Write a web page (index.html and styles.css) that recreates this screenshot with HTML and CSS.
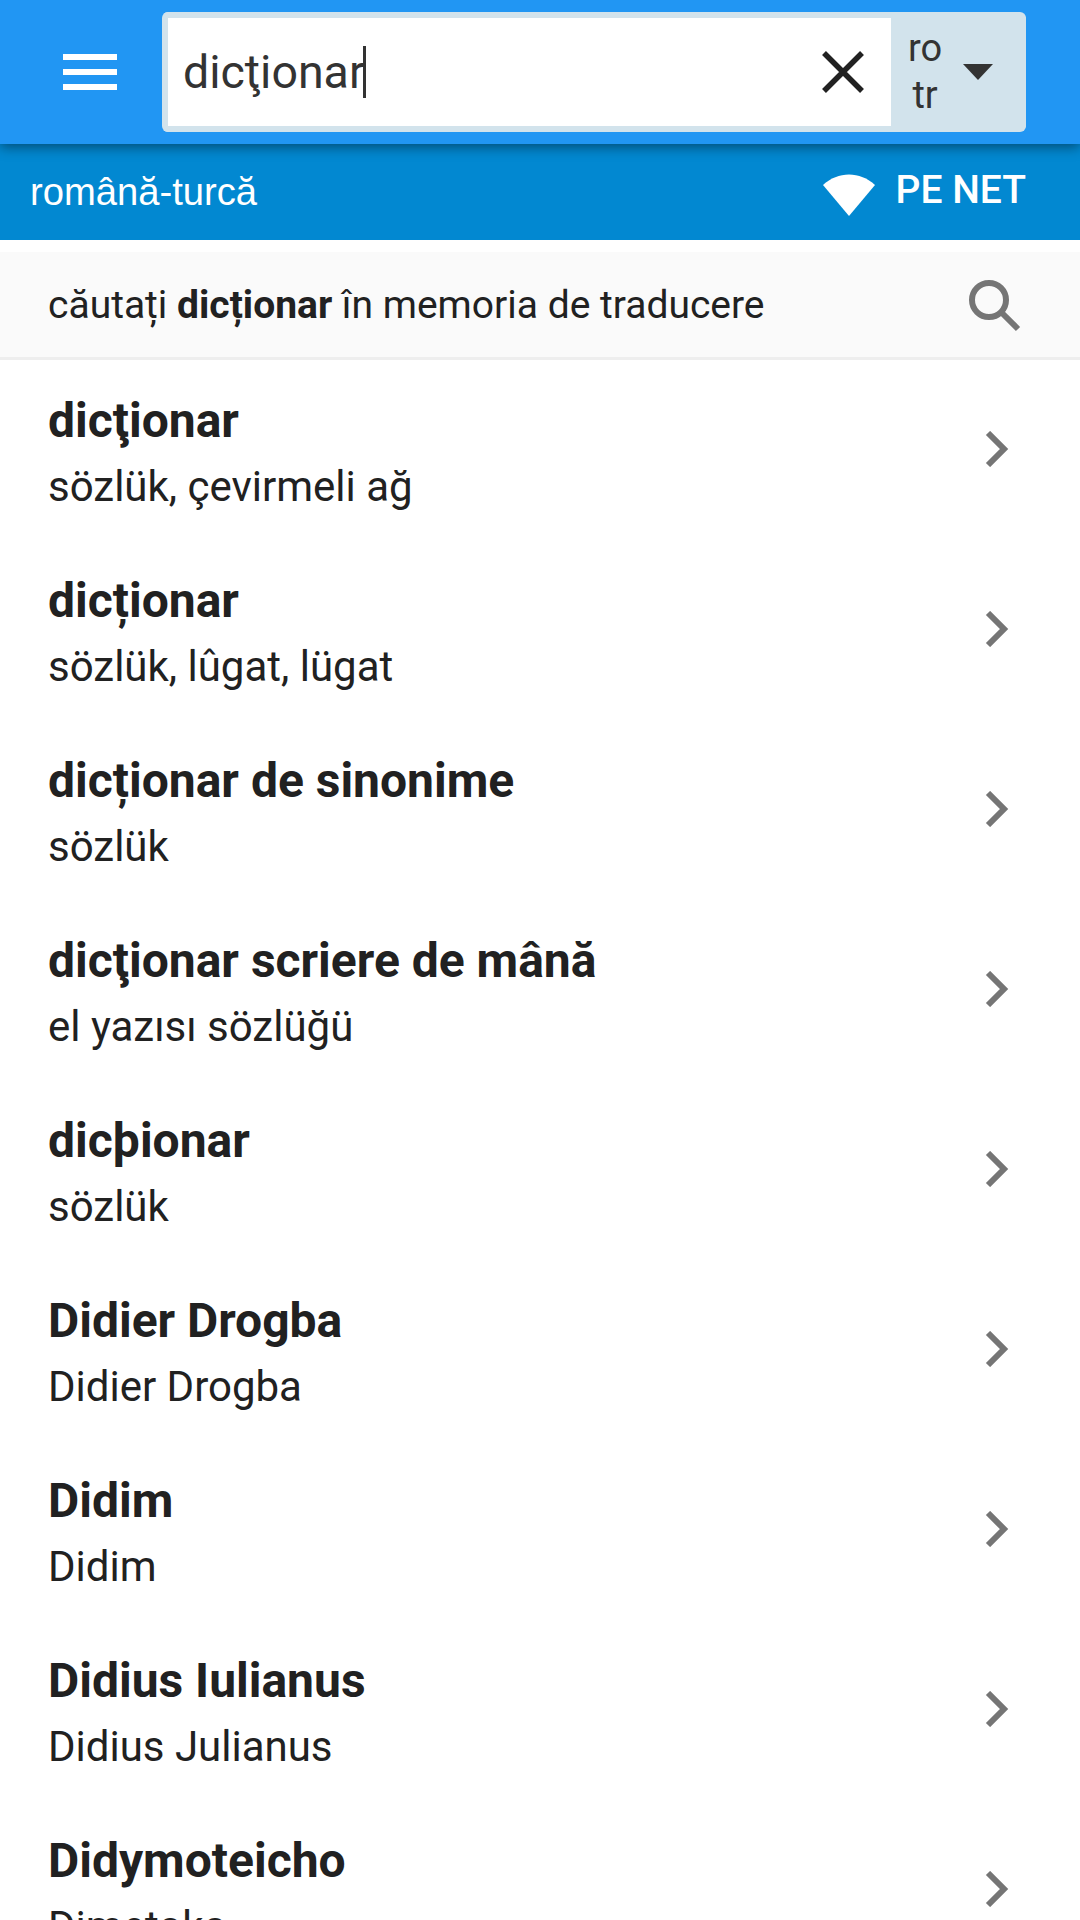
FILE: index.html
```html
<!DOCTYPE html>
<html lang="ro">
<head>
	<meta charset="UTF-8">
	<title>dicționar</title>
	<link rel="stylesheet" href="styles.css">
</head>
<body>
	<div class="app">
		<header class="topbar">
			<div class="menu">
				<svg width="54" height="36" viewBox="0 0 54 36"><path fill="#fff" d="M0 0h54v6H0zM0 15h54v6H0zM0 30h54v6H0z"/></svg>
			</div>
			<div class="searchbox">
				<div class="field">
					<div class="query">dicţionar<span class="caret"></span></div>
					<svg class="clear" width="42" height="42" viewBox="0 0 42 42"><path fill="none" stroke="#212121" stroke-width="5.5" d="M2 2l38 38M40 2L2 40"/></svg>
				</div>
				<div class="langs">
					<div class="codes"><span>ro</span><span>tr</span></div>
					<svg width="30" height="16" viewBox="0 0 30 16"><path fill="#333" d="M0 0h30L15 16z"/></svg>
				</div>
			</div>
		</header>
		<div class="subbar">
			<span class="dict">română-turcă</span>
			<div class="status">
				<svg class="wifi" width="54" height="42" viewBox="0 0 54 42"><path fill="#fff" d="M27 42L1 11C16 -3 38 -3 53 11z"/></svg>
				<span class="online">PE NET</span>
			</div>
		</div>
		<div class="memory">
			<span>căutați <b>dicționar</b> în memoria de traducere</span>
			<svg width="54" height="54" viewBox="0 0 54 54"><circle cx="22" cy="22" r="17" fill="none" stroke="#757575" stroke-width="6"/><path stroke="#757575" stroke-width="6" d="M34 34l17 17"/></svg>
		</div>
		<ul class="list">
			<li><div><h3>dicţionar</h3><p>sözlük, çevirmeli ağ</p></div><svg class="chev" width="24" height="36" viewBox="0 0 24 36"><path fill="none" stroke="#757575" stroke-width="6" d="M3 2l16 16L3 34"/></svg></li>
			<li><div><h3>dicționar</h3><p>sözlük, lûgat, lügat</p></div><svg class="chev" width="24" height="36" viewBox="0 0 24 36"><path fill="none" stroke="#757575" stroke-width="6" d="M3 2l16 16L3 34"/></svg></li>
			<li><div><h3>dicționar de sinonime</h3><p>sözlük</p></div><svg class="chev" width="24" height="36" viewBox="0 0 24 36"><path fill="none" stroke="#757575" stroke-width="6" d="M3 2l16 16L3 34"/></svg></li>
			<li><div><h3>dicţionar scriere de mână</h3><p>el yazısı sözlüğü</p></div><svg class="chev" width="24" height="36" viewBox="0 0 24 36"><path fill="none" stroke="#757575" stroke-width="6" d="M3 2l16 16L3 34"/></svg></li>
			<li><div><h3>dicþionar</h3><p>sözlük</p></div><svg class="chev" width="24" height="36" viewBox="0 0 24 36"><path fill="none" stroke="#757575" stroke-width="6" d="M3 2l16 16L3 34"/></svg></li>
			<li><div><h3>Didier Drogba</h3><p>Didier Drogba</p></div><svg class="chev" width="24" height="36" viewBox="0 0 24 36"><path fill="none" stroke="#757575" stroke-width="6" d="M3 2l16 16L3 34"/></svg></li>
			<li><div><h3>Didim</h3><p>Didim</p></div><svg class="chev" width="24" height="36" viewBox="0 0 24 36"><path fill="none" stroke="#757575" stroke-width="6" d="M3 2l16 16L3 34"/></svg></li>
			<li><div><h3>Didius Iulianus</h3><p>Didius Julianus</p></div><svg class="chev" width="24" height="36" viewBox="0 0 24 36"><path fill="none" stroke="#757575" stroke-width="6" d="M3 2l16 16L3 34"/></svg></li>
			<li><div><h3>Didymoteicho</h3><p>Dimetoka</p></div><svg class="chev" width="24" height="36" viewBox="0 0 24 36"><path fill="none" stroke="#757575" stroke-width="6" d="M3 2l16 16L3 34"/></svg></li>
		</ul>
	</div>
</body>
</html>
```
FILE: styles.css
```css
html,body,ul,li,h3,p{
	margin: 0;
	padding: 0;
}
body{
	background: #fff;
	color: #212121;
	font-family: Roboto, "Liberation Sans", sans-serif;
}
svg{
	display: block;
	flex: none;
}
.app{
	width: 1080px;
	height: 1920px;
	overflow: hidden;
}
.topbar{
	position: relative;
	z-index: 1;
	display: flex;
	align-items: center;
	height: 144px;
	background: #2196f3;
	box-shadow: 0 3px 12px rgba(0,0,0,.45);
}
.menu{
	width: 162px;
	padding-left: 63px;
	box-sizing: border-box;
}
.searchbox{
	display: flex;
	width: 864px;
	height: 120px;
	border: 6px solid #d2e3ec;
	border-right: none;
	border-radius: 6px;
	box-sizing: border-box;
	background: #d2e3ec;
}
.field{
	display: flex;
	align-items: center;
	justify-content: space-between;
	width: 723px;
	padding: 0 27px 0 15px;
	box-sizing: border-box;
	background: #fff;
}
.query{
	display: flex;
	align-items: center;
	font-size: 46.5px;
	color: #333;
}
.caret{
	width: 3px;
	height: 52px;
	margin-left: -2px;
	background: #333;
}
.langs{
	display: flex;
	align-items: center;
	flex: 1;
	padding-left: 17px;
	gap: 21px;
}
.codes{
	display: flex;
	flex-direction: column;
	align-items: center;
	font-size: 38px;
	line-height: 47px;
	color: #333;
}
.subbar{
	display: flex;
	align-items: center;
	justify-content: space-between;
	height: 96px;
	padding: 0 54px 0 30px;
	background: #0288d1;
	color: #fff;
}
.dict{
	font: 38.2px "Liberation Sans", sans-serif;
}
.status{
	display: flex;
	align-items: center;
	gap: 20px;
	font-size: 39px;
	font-weight: 500;
}
.wifi{
	margin-top: 6px;
}
.online{
	margin-bottom: 4px;
}
.memory{
	display: flex;
	align-items: center;
	justify-content: space-between;
	height: 108px;
	margin-top: 12px;
	padding: 0 59px 0 48px;
	background: #fafafa;
	border-bottom: 3px solid #eee;
	box-sizing: border-box;
	font-size: 39px;
}
.list{
	list-style: none;
}
.list li{
	display: flex;
	align-items: center;
	justify-content: space-between;
	height: 180px;
	padding: 0 71px 0 48px;
	box-sizing: border-box;
}
.list li .chev{
	margin-bottom: 2px;
}
.list li div{
	padding-top: 8px;
}
.list h3{
	font-size: 48px;
	line-height: 60px;
	font-weight: 700;
}
.list p{
	margin-top: 6px;
	font-size: 42px;
	line-height: 60px;
}
```
